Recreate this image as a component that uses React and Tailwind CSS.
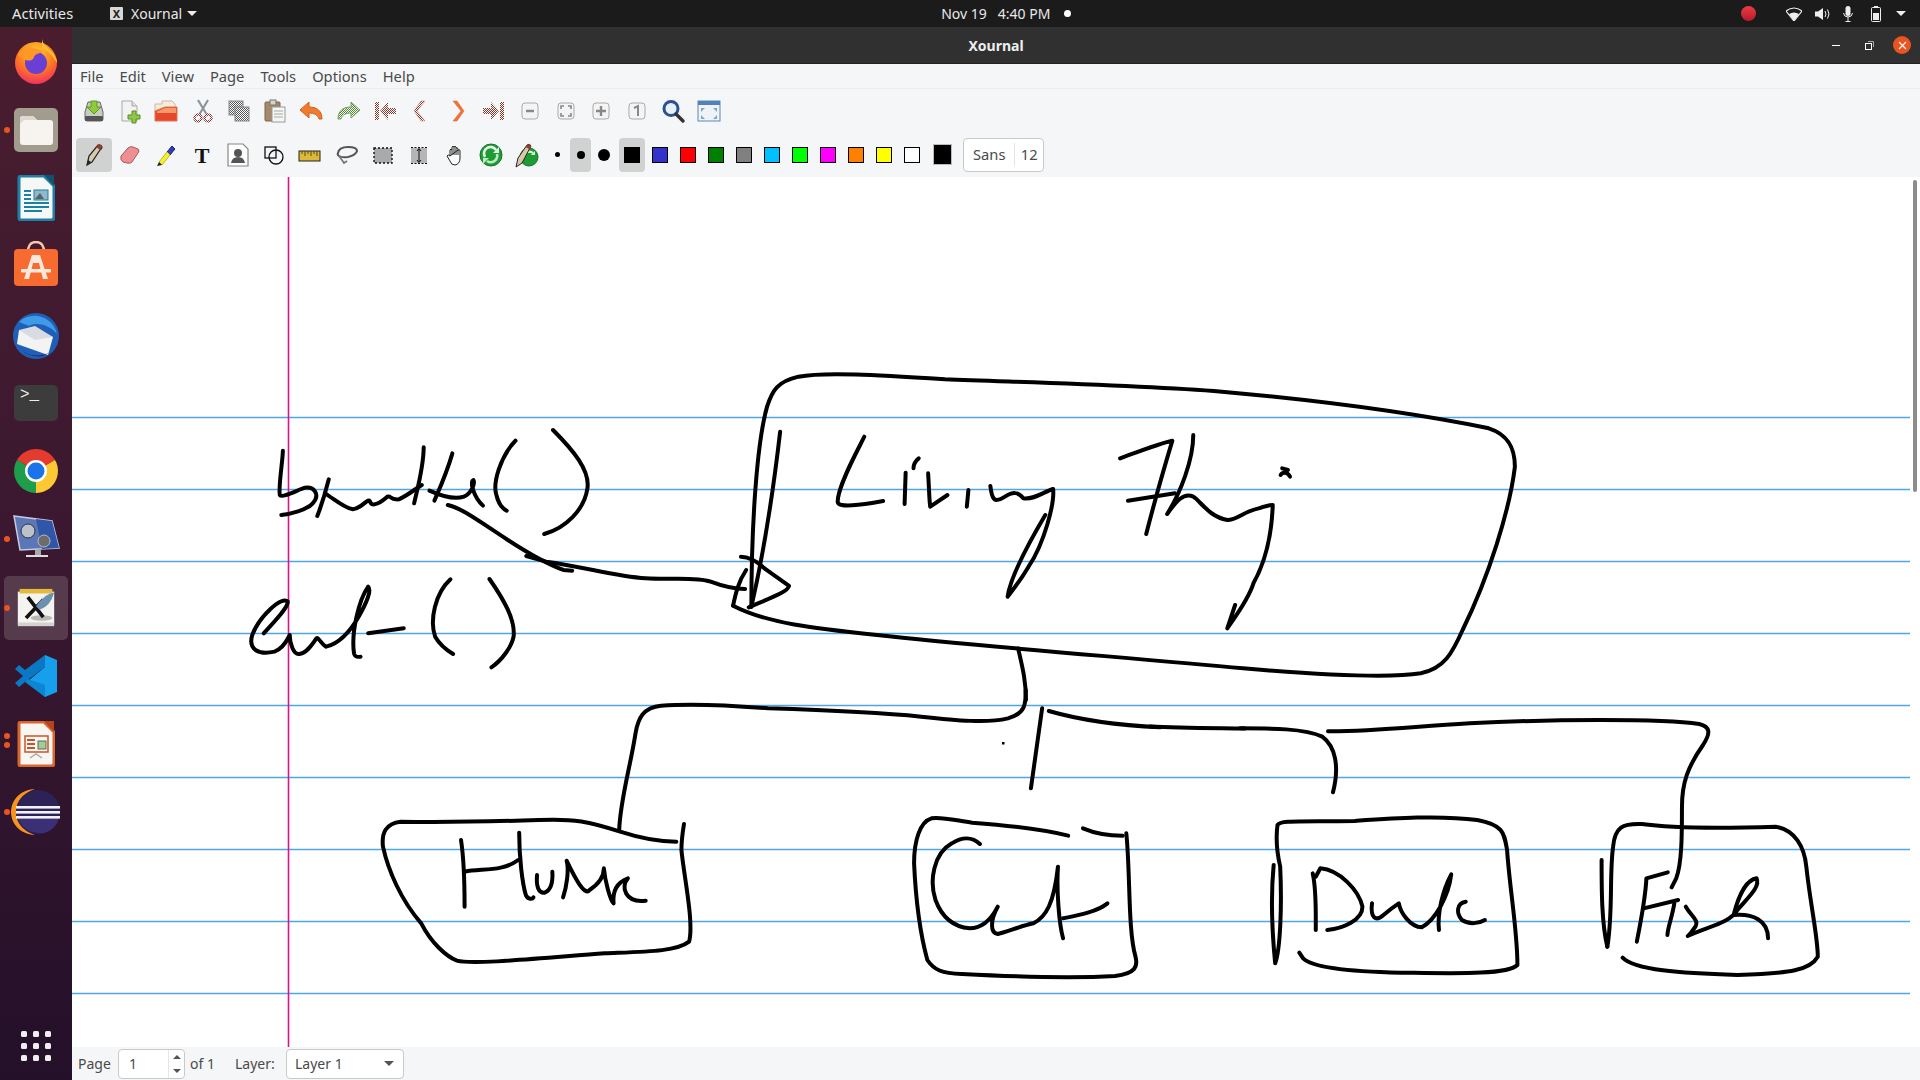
const Dither = ({ id, c }) => (
  <pattern id={id} width="2" height="2" patternUnits="userSpaceOnUse">
    <rect width="1" height="1" fill={c} />
    <rect x="1" y="1" width="1" height="1" fill={c} />
    <rect x="1" width="1" height="1" fill="#fff" />
    <rect y="1" width="1" height="1" fill="#fff" />
  </pattern>
);

const I = ({ children, s = 26 }) => (
  <svg width={s} height={s} viewBox="0 0 26 26">{children}</svg>
);

const toolbar1 = [
  <I key="0"><path d="M4 14 L7 4 H19 L22 14 V21 Q22 23 20 23 H6 Q4 23 4 21Z" fill="#c9ccc5" stroke="#666" /><rect x="4" y="18" width="18" height="5" rx="1" fill="#555" /><path d="M10 3 H16 V9 H20 L13 16 L6 9 H10Z" fill="#8ecb3a" stroke="#5c9a1e" /></I>,
  <I key="1"><path d="M5 3 H15 L20 8 V23 H5Z" fill="#f2f2f2" stroke="#aaa" /><path d="M15 3 V8 H20" fill="#ddd" stroke="#aaa" /><path d="M15 13 H19 V17 H23 V21 H19 V25 H15 V21 H11 V17 H15Z" fill="#8fc846" stroke="#5c8f20" /></I>,
  <I key="2"><path d="M2 6 H9 L9 3 H19 L22 6 V14 H2Z" fill="#f6ecdd" stroke="#cdb5a5" /><path d="M2 13 L12 9 H24 V23 H2Z" fill="#e8482a" stroke="#d97a50" /><path d="M4 13.5 L12 10 H23 V15 H4Z" fill="#f49a6b" /></I>,
  <I key="3"><defs><Dither id="d3" c="#8c2f2f" /></defs><path d="M8 2 L17 17 M18 2 L9 17" stroke="#8f9499" strokeWidth="2.2" /><circle cx="8" cy="20" r="3.5" fill="none" stroke="url(#d3)" strokeWidth="2.5" /><circle cx="18" cy="20" r="3.5" fill="none" stroke="url(#d3)" strokeWidth="2.5" /></I>,
  <I key="4"><defs><Dither id="d4" c="#555" /></defs><rect x="3" y="3" width="14" height="14" fill="url(#d4)" stroke="#888" /><rect x="9" y="9" width="14" height="14" fill="url(#d4)" stroke="#888" /></I>,
  <I key="5"><rect x="3" y="4" width="15" height="19" rx="1" fill="#a6886a" stroke="#7c6248" /><rect x="8" y="2" width="6" height="5" fill="#d9d3c7" stroke="#777" /><rect x="10" y="9" width="13" height="15" fill="#f5f5f3" stroke="#999" /><path d="M12 13 H21 M12 16 H21 M12 19 H21" stroke="#aaa" /></I>,
  <I key="6"><path d="M2 12 L11 4 V9 C18 9 24 12 24 21 L21 21 C20 17 16 15 11 15 V20Z" fill="#f07b2e" stroke="#d65f18" /></I>,
  <I key="7"><defs><Dither id="d7" c="#4d8a2e" /></defs><path d="M24 12 L15 4 V9 C8 9 2 12 2 21 L5 21 C6 17 10 15 15 15 V20Z" fill="url(#d7)" stroke="#7b9d68" /></I>,
  <I key="8"><defs><Dither id="d8" c="#8c3626" /></defs><path d="M3 4 H7 V22 H3Z M24 10 H16 V4 L8 13 L16 22 V16 H24Z" fill="url(#d8)" /></I>,
  <I key="9"><defs><Dither id="d9" c="#8c3626" /></defs><path d="M17 3 L9 13 L17 23 H13 L6 13 L13 3Z" fill="url(#d9)" stroke="#bc8f7e" strokeWidth=".5" /></I>,
  <I key="10"><path d="M9 3 L17 13 L9 23 H13 L20 13 L13 3Z" fill="#ef7338" stroke="#e4622a" strokeWidth=".5" /></I>,
  <I key="11"><defs><Dither id="d11" c="#8c3626" /></defs><path d="M23 4 H19 V22 H23Z M2 10 H10 V4 L18 13 L10 22 V16 H2Z" fill="url(#d11)" /></I>,
  <I key="12"><rect x="5" y="5" width="16" height="16" rx="3" fill="#f4f4f4" stroke="#aaa" /><path d="M9 13 H17" stroke="#888" strokeWidth="2.5" /></I>,
  <I key="13"><rect x="5" y="5" width="16" height="16" rx="3" fill="#f4f4f4" stroke="#aaa" /><path d="M8 11 V8 H11 M15 8 H18 V11 M18 15 V18 H15 M11 18 H8 V15" fill="none" stroke="#888" strokeWidth="1.6" /></I>,
  <I key="14"><rect x="5" y="5" width="16" height="16" rx="3" fill="#f4f4f4" stroke="#aaa" /><path d="M13 8 V18 M8 13 H18" stroke="#888" strokeWidth="2.4" /></I>,
  <I key="15"><rect x="5" y="5" width="16" height="16" rx="3" fill="#f4f4f4" stroke="#aaa" /><path d="M10 10 L14 8 V18" fill="none" stroke="#888" strokeWidth="2" /></I>,
  <I key="16"><circle cx="11" cy="10.5" r="7" fill="#e8f0f8" stroke="#2c4f93" strokeWidth="3" /><path d="M16 16 L23 23" stroke="#333" strokeWidth="3.4" strokeLinecap="round" /></I>,
  <I key="17"><rect x="2" y="3" width="22" height="20" fill="#eef3f8" stroke="#5c88b8" /><rect x="2" y="3" width="22" height="4" fill="#4f82b8" /><path d="M5 10 H9 L5 14Z M21 10 H17 L21 14Z M5 21 H9 L5 17Z M21 21 H17 L21 17Z" fill="#8aa4bd" /></I>,
];

const toolbar2 = [
  <I key="0"><path d="M6 23 L8 14 L17 3 Q20 2 21 5 Q21 7 19 8 L11 20Z" fill="#d8c9a8" stroke="#222" strokeWidth="1.2" /><path d="M15 5 L19 8 L21 5 Q20 2 17 3Z" fill="#9b3b2f" /><path d="M6 23 L7 18 L10 20Z" fill="#222" /></I>,
  <I key="1"><path d="M4 14 L11 6 Q13 4 16 5 L21 7 Q23 9 21 11 L15 20 Q13 22 10 21 L6 20 Q3 18 4 14Z" fill="#ee8f92" stroke="#a85a5a" /></I>,
  <I key="2"><path d="M14 10 L19 4 L22 7 L17 13Z" fill="#2f3dba" stroke="#1b237a" /><path d="M6 20 L14 10 L17 13 L9 23Z" fill="#f5f02e" stroke="#bdb820" /><path d="M6 20 L9 23 L4 24Z" fill="#222" /></I>,
  <I key="3"><text x="13" y="21" textAnchor="middle" fontFamily="Liberation Serif, serif" fontWeight="700" fontSize="22" fill="#111">T</text></I>,
  <I key="4"><path d="M3 2 H18 L23 7 V24 H3Z" fill="#fff" stroke="#888" strokeWidth="1.2" /><circle cx="13" cy="11" r="4" fill="#555" /><path d="M6 21 Q7 15 13 15 Q19 15 20 21Z" fill="#555" /></I>,
  <I key="5"><rect x="3" y="5" width="11" height="11" fill="#f5f5f5" stroke="#111" strokeWidth="1.3" /><circle cx="14" cy="15" r="7" fill="none" stroke="#111" strokeWidth="1.3" /></I>,
  <I key="6"><rect x="1" y="9" width="21" height="10" fill="#dcb93a" stroke="#222" /><path d="M4 9 V12 M7 9 V14 M10 9 V12 M13 9 V14 M16 9 V12 M19 9 V14" stroke="#5a4a12" /></I>,
  <I key="7"><path d="M4 11 Q5 5 14 5 Q23 5 23 9 Q22 13 14 15 Q8 16 5 14 Q3 12 4 11Z" fill="none" stroke="#555" strokeWidth="2" /><path d="M5 14 Q8 18 10 21 L13 19" fill="none" stroke="#777" strokeWidth="1.8" /></I>,
  <I key="8"><rect x="4" y="6" width="18" height="15" fill="#aaa" stroke="#111" strokeWidth="1.4" strokeDasharray="2 2" /></I>,
  <I key="9"><rect x="5" y="6" width="16" height="15" fill="#b5b5b5" /><path d="M5 5.5 H21 M5 21.5 H21" stroke="#111" strokeDasharray="2 1.5" /><path d="M13 7 V20 M11 9 L13 6.5 L15 9 M11 18 L13 20.5 L15 18" fill="none" stroke="#111" /></I>,
  <I key="10"><path d="M8 14 V8 Q9 6 10 8 V13 M10 8 V5 Q11 3.5 12 5 V13 M12 5 Q13 3.5 14 5 V13 M14 6 Q15.5 5 16 7 V13 M16 8 Q18 7 18 9 V16 Q18 22 13 23 Q9 23 8 19 L5 14 Q6 12 8 14Z" fill="#fff" stroke="#222" strokeWidth="1" /></I>,
  <I key="11"><circle cx="13" cy="13" r="11" fill="#1f9b35" stroke="#14762a" /><path d="M7 15 A6.5 6.5 0 0 1 18 8" fill="none" stroke="#e3f7e5" strokeWidth="2.6" /><path d="M15 11 H21 V5Z" fill="#e3f7e5" /><path d="M19 12 A6.5 6.5 0 0 1 9 19" fill="none" stroke="#b8ecbf" strokeWidth="2.6" /><path d="M11 16 H5 V22Z" fill="#b8ecbf" /></I>,
  <I key="12"><circle cx="15" cy="15" r="9" fill="#1f9b35" stroke="#14762a" /><path d="M10 16 A5.5 5.5 0 0 1 19 11" fill="none" stroke="#e3f7e5" strokeWidth="2.2" /><path d="M17 13 H21 V9Z" fill="#e3f7e5" /><path d="M2 25 L4 16 L13 3 Q16 1 17 4 L8 21Z" fill="#d8c9a8" stroke="#222" /><path d="M13 3 Q16 1 17 4 L15 7 L11.5 5Z" fill="#9b3b2f" /></I>,
];

const colors = ["#3333cc", "#ff0000", "#008000", "#808080", "#00c0ff", "#00ff00", "#ff00ff", "#ff8000", "#ffff00", "#ffffff"];

const Badge = ({ top }) => (
  <span className={`absolute left-[4px] w-[6px] h-[6px] rounded-full bg-[#e95420] ${top}`} />
);

const Drawing = () => (
  <svg className="block w-full h-full" viewBox="72 177 1838 870" preserveAspectRatio="none">
    {[417.5, 489.5, 561.5, 633.5, 705.5, 777.5, 849.5, 921.5, 993.5].map((y) => (
      <line key={y} x1="72" x2="1910" y1={y} y2={y} stroke="#4ea6e4" strokeWidth="1.5" />
    ))}
    <line x1="288.5" x2="288.5" y1="177" y2="1047" stroke="#d9138c" strokeWidth="1.6" />
    <g fill="none" stroke="#000" strokeLinecap="round" strokeLinejoin="round">
      <path d="M1150 726.5 C1180 728 1210 728 1245 728.5" strokeWidth="4" />
      <g transform="translate(240 360) scale(0.38265 0.33333)" style={{ strokeWidth: 4 }}>
        {[
          "M112 272 C112 300 100 380 104 405 C110 415 150 390 170 383 C195 380 210 405 190 430 C175 450 130 462 108 465",
          "M232 358 C225 390 215 430 202 468",
          "M222 400 C250 420 275 445 295 448 C320 445 335 410 340 425 C345 445 370 425 385 410 C395 405 390 420 415 418 C440 405 460 385 475 375",
          "M480 262 C480 320 465 380 455 430",
          "M555 280 C540 340 520 390 508 422",
          "M495 392 C530 410 560 420 585 410 C605 400 615 370 610 360 C600 365 610 410 635 437",
          "M720 242 C680 290 660 370 670 405 C675 430 685 445 697 452",
          "M818 210 C870 270 915 330 908 385 C900 450 850 505 795 522",
          "M543 435 C580 445 620 480 700 540 C760 585 810 615 845 630 L868 632",
          "M748 588 C770 595 785 600 800 605 C900 620 980 650 1060 655 C1130 660 1190 650 1230 665 C1260 678 1290 687 1320 687",
          "M62 820 C85 790 125 745 125 725 C110 705 50 770 32 825 C20 870 50 885 90 875 C115 865 125 835 130 825 C130 850 140 885 155 882 C175 880 190 850 200 835 C205 830 210 850 225 860 C260 850 290 810 310 770 C330 730 345 690 335 680 C310 720 290 820 298 880 C300 890 305 892 315 890",
          "M335 820 L428 805",
          "M550 658 C510 700 495 780 510 830 C520 850 540 870 557 882",
          "M652 657 C690 720 720 780 715 830 C710 860 685 900 657 922",
        ].map((d) => <path key={d} d={d} vectorEffect="non-scaling-stroke" />)}
      </g>
      <g transform="translate(720 360) scale(0.52296 0.33333)" style={{ strokeWidth: 4 }}>
        {[
          "M60 740 C60 500 70 250 90 140 C100 90 110 65 150 50 C200 35 300 45 430 58 C600 68 800 75 960 95 C1100 115 1300 150 1470 205 C1510 225 1520 270 1520 320 C1510 450 1470 650 1420 810 C1400 880 1385 925 1340 940 C1280 955 1150 945 1000 925 C800 895 500 860 300 825 C180 805 90 790 25 737",
          "M50 630 C35 665 30 700 25 737",
          "M115 215 C105 350 85 570 60 740",
          "M40 590 C60 590 75 610 85 625 L132 678 C130 695 100 712 55 742",
          "M276 230 C260 280 225 380 225 425 C225 445 270 435 312 423",
          "M380 295 C372 305 370 315 370 325",
          "M355 338 L353 432",
          "M398 340 C400 390 400 420 402 440 L435 405",
          "M475 390 L472 440",
          "M517 378 C520 420 525 430 545 410 C560 395 570 395 580 415 C600 420 620 395 637 387 C640 430 620 550 590 620 C575 660 560 690 550 710 C555 650 590 550 622 465",
          "M765 295 C800 275 840 250 865 242 C850 320 830 430 815 522",
          "M780 422 L870 400",
          "M905 225 C905 300 880 400 855 462 C870 430 885 395 905 410 C920 425 935 470 970 480 C990 480 1000 455 1030 445 C1040 440 1050 435 1057 435 C1055 520 1045 600 1020 670 C1010 720 985 770 970 805 L985 735",
          "M1072 345 C1076 335 1085 335 1090 350",
          "M1075 325 L1086 330",
          "M570 865 C578 920 585 960 585 1020",
        ].map((d) => <path key={d} d={d} vectorEffect="non-scaling-stroke" />)}
      </g>
      <g transform="translate(360 690) scale(0.5102 0.33333)" style={{ strokeWidth: 4 }}>
        {[
          "M1305 0 C1305 40 1305 70 1270 85 C1230 100 1170 92 1100 80 C1000 65 900 60 800 55 C720 45 650 40 590 47 C555 52 545 85 540 130 C530 230 510 330 508 420",
          "M620 455 C590 455 560 450 510 425 C450 395 420 385 350 390 C250 395 150 397 80 395 C50 400 42 430 45 470 C55 540 80 630 120 700 C140 760 170 800 190 812 C220 825 350 805 480 790 C560 785 620 785 645 755 C655 700 635 560 630 480 C630 450 632 430 635 402",
          "M198 450 C205 520 205 600 205 650",
          "M205 545 C240 535 280 545 310 510",
          "M312 428 C312 500 318 580 325 615 C330 630 338 628 340 622",
          "M347 555 C345 590 350 610 362 608 C375 600 378 570 377 545",
          "M398 622 C405 590 410 540 405 512 C420 560 440 620 450 600 C470 580 478 560 478 535 C480 570 490 630 497 640 C495 610 500 580 525 565 C510 590 520 640 560 632",
          "M1388 437 C1330 415 1260 405 1200 398 C1170 392 1140 380 1120 385 C1098 395 1086 450 1086 520 C1089 620 1096 720 1112 810 C1125 840 1140 850 1180 852 C1280 860 1400 865 1480 858 C1520 850 1525 830 1520 800 C1505 720 1510 550 1502 430",
          "M1417 415 C1440 430 1465 437 1495 437",
          "M1215 462 C1200 440 1180 440 1160 460 C1125 490 1115 570 1128 630 C1140 680 1160 710 1195 715 C1215 715 1235 695 1250 650 C1235 690 1235 730 1250 732 C1270 725 1300 705 1320 700 C1345 680 1360 640 1368 530 C1365 600 1370 700 1378 745",
          "M1378 685 C1410 675 1445 665 1465 640",
          "M1337 55 L1315 295",
          "M1350 63 C1400 85 1470 105 1568 112",
        ].map((d) => <path key={d} d={d} vectorEffect="non-scaling-stroke" />)}
      </g>
      <g transform="translate(1240 690) scale(0.38265 0.33333)" style={{ strokeWidth: 4 }}>
        {[
          "M0 115 C80 115 170 115 215 140 C250 170 260 230 243 307",
          "M230 124 C350 125 450 110 600 100 C800 88 1100 85 1200 102 C1230 110 1230 130 1210 165 C1170 230 1155 280 1155 350 C1155 430 1155 520 1140 565 L1128 592",
          "M88 525 C80 620 85 740 92 820 C105 780 110 650 105 530 C95 480 95 430 98 405 C105 390 150 395 300 393 C400 385 520 375 620 390 C690 405 690 430 698 480 C705 600 725 720 725 825 C700 855 560 850 420 848 C300 845 190 835 165 805 L155 788",
          "M190 550 C200 600 198 680 198 720",
          "M198 560 L210 535 C260 540 310 600 320 650 C320 690 270 715 228 720",
          "M345 640 C340 685 355 695 375 675 C395 655 415 640 415 640 C420 670 445 710 475 712 C510 690 545 620 552 553 C530 600 515 670 520 720",
          "M590 635 C565 640 565 670 580 690 C600 705 625 700 640 690",
          "M960 770 C945 700 945 600 945 510",
          "M960 770 C975 670 965 550 975 470 C980 410 1000 400 1050 402 C1130 415 1260 415 1400 410 C1450 420 1475 470 1480 530 C1490 640 1510 740 1510 800 C1490 840 1440 850 1300 855 C1150 850 1030 840 1000 803",
          "M1118 547 L1062 565 C1060 620 1050 680 1037 755",
          "M1055 655 L1145 630",
          "M1135 640 C1130 680 1118 710 1117 735",
          "M1165 650 C1180 680 1200 690 1190 710 C1180 725 1175 735 1170 738 C1220 710 1280 700 1300 660 C1330 620 1360 590 1350 565 C1320 570 1300 630 1290 675 C1340 670 1380 690 1380 745",
        ].map((d) => <path key={d} d={d} vectorEffect="non-scaling-stroke" />)}
      </g>
    </g>
    <rect x="1002" y="742" width="2.5" height="2.5" fill="#000" />
  </svg>
);

const Dock = () => (
  <div className="relative w-[72px] shrink-0 flex flex-col items-center pt-px bg-gradient-to-b from-[#4a1d2e] via-[#3a1830] to-[#241029]">
    <div className="relative h-[68.2px] w-full flex items-center justify-center">
      <svg className="-mt-[2px]" width="48" height="48" viewBox="0 0 48 48">
        <defs><radialGradient id="ff" cx="50%" cy="25%" r="80%"><stop offset="0" stopColor="#ffcb30" /><stop offset=".55" stopColor="#ff7a20" /><stop offset="1" stopColor="#f0246c" /></radialGradient></defs>
        <circle cx="24" cy="26" r="21" fill="url(#ff)" />
        <path d="M30 1 C30 10 42 12 45 24 C46 30 40 14 30 12Z" fill="#ffbd2e" />
        <circle cx="24" cy="26" r="11" fill="#6b3fd4" />
        <path d="M6 18 C12 10 22 10 30 14 C34 16 24 15 22 20 C20 26 12 24 6 18Z" fill="#ff9824" />
      </svg>
    </div>
    <div className="relative h-[68.2px] w-full flex items-center justify-center">
      <Badge top="top-[31px]" />
      <div className="w-[44px] h-[44px] rounded-[5px] bg-[#a29c8e] flex items-center justify-center">
        <svg width="33" height="29" viewBox="0 0 33 29"><path d="M0 3 Q0 0 3 0 H13 L17 4 H30 Q33 4 33 7 V26 Q33 29 30 29 H3 Q0 29 0 26Z" fill="#f7f4ef" /><path d="M0 3 Q0 0 3 0 H13 L17 4 H4 L0 8Z" fill="#ddd9d1" /></svg>
      </div>
    </div>
    <div className="relative h-[68.2px] w-full flex items-center justify-center">
      <svg width="38" height="46" viewBox="0 0 38 46">
        <path d="M2 3 Q2 1 4 1 H27 L37 11 V42 Q37 45 34 45 H4 Q2 45 2 43Z" fill="#f6f8f8" stroke="#1c7fa5" strokeWidth="3" />
        <path d="M27 0 H37 V11Z" fill="#15506f" />
        <path d="M7 16 H14 M7 20 H14 M7 24 H14 M7 28 H32 M7 32 H32 M7 36 H25" stroke="#1c7fa5" strokeWidth="2.2" />
        <rect x="17" y="15" width="14" height="10" fill="#8fb8c8" stroke="#1c7fa5" />
        <path d="M18 24 L23 18 L27 24Z" fill="#56636a" />
      </svg>
    </div>
    <div className="relative h-[68.2px] w-full flex items-center justify-center">
      <svg className="-mt-[5px]" width="46" height="46" viewBox="0 0 46 46">
        <path d="M15 11 Q15 1 23 1 Q31 1 31 11" fill="none" stroke="#f9c9ad" strokeWidth="2.4" />
        <rect x="1" y="8" width="44" height="37" rx="4" fill="#f76b31" />
        <path d="M19 14 H27 L35 38 H30 L26 22 H20 L16 38 H11Z" fill="#fde8dc" />
        <rect x="8" y="28" width="30" height="3.4" rx="1" fill="#fde8dc" />
      </svg>
    </div>
    <div className="relative h-[68.2px] w-full flex items-center justify-center">
      <svg width="50" height="50" viewBox="0 0 50 50">
        <circle cx="25" cy="26" r="23" fill="#1f5fb8" />
        <path d="M8 12 C20 0 42 6 46 24 C38 14 24 12 18 16Z" fill="#3f9be8" />
        <path d="M8 20 L42 27 L37 45 L6 34Z" fill="#f3f3f3" />
        <path d="M8 20 L24 16 L42 27 L24 30Z" fill="#d8dbe2" />
        <path d="M10 40 Q24 50 40 42 L32 46 Q20 48 10 40Z" fill="#25265f" />
      </svg>
    </div>
    <div className="relative h-[68.2px] w-full flex items-center justify-center">
      <div className="w-[44px] h-[36px] rounded-[5px] bg-[#3c3c3c] px-[6px] pt-[2px] text-[16px] leading-[16px] text-[#eee] [font-family:'Liberation_Mono',monospace]">
        &gt;_
      </div>
    </div>
    <div className="relative h-[68.2px] w-full flex items-center justify-center">
      <svg width="48" height="48" viewBox="0 0 48 48">
        <path d="M24 24 L5 13 A22 22 0 0 1 43 13Z" fill="#e33b2e" />
        <path d="M24 24 L43 13 A22 22 0 0 1 24 46Z" fill="#fcc934" />
        <path d="M24 24 L24 46 A22 22 0 0 1 5 13Z" fill="#1e9e4a" />
        <circle cx="24" cy="24" r="11" fill="#fff" />
        <circle cx="24" cy="24" r="8.5" fill="#1a73e8" />
      </svg>
    </div>
    <div className="relative h-[68.2px] w-full flex items-center justify-center">
      <Badge top="top-[31px]" />
      <svg width="48" height="50" viewBox="0 0 48 50">
        <path d="M2 2 L40 7 L47 34 L8 36Z" fill="#5b77b8" stroke="#c9c9dc" strokeWidth="1.5" />
        <path d="M24 5 L40 7 L47 34 L30 35Z" fill="#2f56a8" />
        <circle cx="16" cy="17" r="7" fill="#bcc2cc" stroke="#333" />
        <circle cx="32" cy="27" r="6" fill="#6c6c6c" stroke="#bbb" />
        <rect x="23" y="36" width="6" height="5" fill="#aaa" />
        <rect x="14" y="41" width="22" height="2" fill="#ddd" />
      </svg>
    </div>
    <div className="relative h-[68.2px] w-full flex items-center justify-center">
      <div className="w-[64px] h-[64px] rounded-[5px] bg-[#563b4c] flex items-center justify-center">
        <svg width="40" height="42" viewBox="0 0 44 44">
          <rect x="2" y="4" width="40" height="36" fill="#f3f3ef" />
          <rect x="4" y="1" width="36" height="5" fill="#e4b93c" />
          <rect x="2" y="38" width="40" height="4" fill="#d2d2ce" />
          <ellipse cx="28" cy="33" rx="12" ry="3" fill="#b8b8b8" />
          <path d="M13 10 L30 32 M30 13 L11 33" stroke="#111" strokeWidth="4" />
          <path d="M22 20 Q32 6 42 5 Q38 20 26 24Z" fill="#6b90b0" />
        </svg>
      </div>
      <Badge top="top-[31px]" />
    </div>
    <div className="relative h-[68.2px] w-full flex items-center justify-center">
      <svg width="44" height="42" viewBox="0 0 44 42">
        <path d="M31 0 L43 5 V37 L31 42 L14 26 L31 12Z" fill="#16a0ec" />
        <path d="M31 0 V12 L11 27 L5 32 L1 28 L9 21 L1 14 L5 10 L11 15Z" fill="#0a78c2" />
        <path d="M31 30 V42 L11 27 L14 24Z" fill="#0c86d2" />
      </svg>
    </div>
    <div className="relative h-[68.2px] w-full flex items-center justify-center">
      <Badge top="top-[23px]" />
      <Badge top="top-[32px]" />
      <svg width="38" height="46" viewBox="0 0 38 46">
        <path d="M2 3 Q2 1 4 1 H27 L37 11 V42 Q37 45 34 45 H4 Q2 45 2 43Z" fill="#f8f6f3" stroke="#d9642c" strokeWidth="3" />
        <path d="M27 0 H37 V11Z" fill="#b5431c" />
        <rect x="8" y="15" width="23" height="16" fill="none" stroke="#c5562b" strokeWidth="1.5" />
        <path d="M10 19 H18 M10 23 H18 M10 27 H18" stroke="#c5562b" strokeWidth="2" />
        <rect x="21" y="20" width="8" height="8" fill="#9fcf8c" stroke="#666" />
        <path d="M13 37 L19 33 L25 37" fill="none" stroke="#aaa" strokeWidth="1.5" />
      </svg>
    </div>
    <div className="relative h-[68.2px] w-full flex items-center justify-center">
      <Badge top="top-[31px]" />
      <svg width="50" height="46" viewBox="0 0 50 46">
        <path d="M24 0 C8 1 0 12 0 23 C0 34 8 45 24 46 C12 42 5 33 5 23 C5 13 12 4 24 0Z" fill="#f7941e" />
        <circle cx="27" cy="23" r="22" fill="#2c2255" />
        <path d="M6 28 H48 Q46 40 33 44 Q16 46 8 32Z" fill="#3b2f77" />
        <rect x="5" y="17" width="44" height="2.6" fill="#f2f0fa" />
        <rect x="5" y="22" width="44" height="2.6" fill="#f2f0fa" />
        <rect x="5" y="27" width="44" height="2.6" fill="#f2f0fa" />
      </svg>
    </div>
    <div className="mt-auto mb-[19px] grid grid-cols-3 gap-[6px]">
      {[0, 1, 2, 3, 4, 5, 6, 7, 8].map((i) => (
        <span key={i} className="w-[6px] h-[6px] rounded-[1.5px] bg-[#f0eef0]" />
      ))}
    </div>
  </div>
);

export default function App() {
  return (
    <div className="w-[1920px] h-[1080px] overflow-hidden flex flex-col bg-white [font-family:'Noto_Sans','Open_Sans',sans-serif]">
      <div className="h-[27px] shrink-0 bg-[#1b1b1b] flex items-center text-[14px] text-[#e8e8e8]">
        <span className="ml-[12px] w-[98px] text-[14.7px]">Activities</span>
        <div className="w-[13px] h-[13px] bg-[#d8d8d4] rounded-[1px] flex items-center justify-center text-[11px] font-bold leading-none text-[#222]">X</div>
        <span className="ml-[8px]">Xournal</span>
        <span className="ml-[5px] w-0 h-0 border-x-[5px] border-x-transparent border-t-[5px] border-t-[#eee]" />
        <span className="ml-[744px] text-[14px]">Nov 19&nbsp;&nbsp;&nbsp;4:40 PM</span>
        <span className="ml-[14px] w-[7px] h-[7px] rounded-full bg-white" />
        <div className="ml-auto flex items-center gap-[13px] mr-[14px]">
          <span className="mr-[1px] w-[15px] h-[15px] rounded-full bg-gradient-to-b from-[#ee3b45] to-[#b81a2a]" />
          <svg className="ml-[16px]" width="16" height="14" viewBox="0 0 16 14"><path d="M0 4 Q8 -2 16 4 L8 14Z" fill="none" stroke="#eee" strokeWidth="1.2" /><path d="M3 7 Q8 4 13 7 L8 14Z" fill="#eee" /></svg>
          <svg width="15" height="14" viewBox="0 0 15 14"><path d="M0 4.5 H3 L8 1 V13 L3 9.5 H0Z" fill="#eee" /><path d="M10 4 Q12 7 10 10 M12.5 2.5 Q15.5 7 12.5 11.5" fill="none" stroke="#eee" /></svg>
          <svg width="10" height="16" viewBox="0 0 10 16"><rect x="2.5" y="0" width="5" height="10" rx="2.5" fill="#eee" /><path d="M0.5 7 Q1 11 5 11 Q9 11 9.5 7 M5 11 V15 M2.5 15.5 H7.5" fill="none" stroke="#eee" /></svg>
          <svg className="ml-[5px]" width="10" height="16" viewBox="0 0 10 16"><rect x="0.5" y="1.5" width="9" height="14" rx="1" fill="none" stroke="#eee" /><rect x="3" y="0" width="4" height="1.5" fill="#eee" /><rect x="2" y="7" width="6" height="7" fill="#eee" /></svg>
          <span className="ml-[2px] w-0 h-0 border-x-[5px] border-x-transparent border-t-[5px] border-t-[#eee]" />
        </div>
      </div>
      <div className="flex-1 min-h-0 flex">
        <Dock />
        <div className="flex-1 min-w-0 flex flex-col">
          <div className="h-[37px] shrink-0 bg-[#303030] border-b border-[#222] relative flex items-center justify-center text-[14px] font-bold text-[#eee]">
            Xournal
            <div className="absolute right-[9px] top-[0px] h-[36px] flex items-center">
              <span className="w-[8px] h-px bg-white mr-[25px]" />
              <svg className="mr-[19px]" width="9" height="9" viewBox="0 0 9 9"><rect x="0.5" y="2.5" width="6" height="6" fill="none" stroke="#fff" /><path d="M3 .5 H8.5 V6" fill="none" stroke="#aaa" /></svg>
              <span className="w-[18px] h-[18px] rounded-full bg-[#e95420] flex items-center justify-center">
                <svg width="9" height="9" viewBox="0 0 9 9"><path d="M1 1 L8 8 M8 1 L1 8" stroke="#fff" strokeWidth="1.1" /></svg>
              </span>
            </div>
          </div>
          <div className="h-[25px] shrink-0 bg-[#f5f6f7] border-b border-[#ebedee] flex items-center text-[14.7px] text-[#4a4a4a]">
            {["File", "Edit", "View", "Page", "Tools", "Options", "Help"].map((m) => (
              <span key={m} className="px-[8px]">{m}</span>
            ))}
          </div>
          <div className="h-[44px] shrink-0 bg-[#f5f6f7] flex items-center pl-[4px]">
            {toolbar1.map((ic, i) => (
              <span key={i} className={`w-[36.2px] flex justify-center ${i >= 7 && i <= 13 ? "pl-[3px]" : ""}`}>{ic}</span>
            ))}
          </div>
          <div className="h-[44px] shrink-0 bg-[#f5f6f7] flex items-center pl-[4px] pb-px">
            {toolbar2.map((ic, i) => (
              <span key={i} className={`w-[36.1px] h-[34px] flex items-center justify-center ${i === 0 ? "bg-[#d0d1d1] rounded-[4px]" : ""}`}>{ic}</span>
            ))}
            <span className="w-[25px] h-[34px] flex items-center justify-center"><span className="w-[5px] h-[5px] rounded-full bg-black" /></span>
            <span className="w-[21px] h-[34px] bg-[#d0d1d1] rounded-[4px] flex items-center justify-center"><span className="w-[8px] h-[8px] rounded-full bg-black" /></span>
            <span className="w-[26px] h-[34px] flex items-center justify-center"><span className="w-[12px] h-[12px] rounded-full bg-black" /></span>
            <span className="ml-[2px] w-[26px] h-[34px] bg-[#d0d1d1] rounded-[4px] flex items-center justify-center"><span className="w-[16px] h-[16px] bg-black" /></span>
            <span className="w-px" />
            {colors.map((c) => (
              <span key={c} className="w-[28px] flex justify-center">
                <span className="w-[16px] h-[16px] border border-black" style={{ backgroundColor: c }} />
              </span>
            ))}
            <span className="ml-[7px] w-[19px] h-[21px] bg-black border border-[#bbb]" />
            <div className="ml-[11px] w-[81px] h-[34px] bg-white border border-[#c8caca] rounded-[4px] flex items-center text-[14.7px] text-[#4a4a4a]">
              <span className="w-[51px] text-center border-r border-[#e5e5e5]">Sans</span>
              <span className="flex-1 text-center">12</span>
            </div>
          </div>
          <div className="flex-1 min-h-0 flex bg-white">
            <div className="flex-1 min-w-0"><Drawing /></div>
            <div className="w-[10px] shrink-0 bg-white pt-[3px] pl-[3px]">
              <div className="w-[4px] h-[312px] rounded-full bg-[#8c8c8c]" />
            </div>
          </div>
          <div className="h-[33px] shrink-0 bg-[#f5f6f7] flex items-center text-[14px] text-[#4a4a4a]">
            <span className="ml-[6px] w-[40px]">Page</span>
            <div className="w-[67px] h-[30px] bg-white border border-[#c8caca] rounded-[4px] flex items-center">
              <span className="ml-[10px] flex-1">1</span>
              <div className="w-[16px] h-full border-l border-[#e5e5e5] flex flex-col items-center justify-around">
                <span className="w-0 h-0 border-x-[4px] border-x-transparent border-b-[4px] border-b-[#555]" />
                <span className="w-0 h-0 border-x-[4px] border-x-transparent border-t-[4px] border-t-[#555]" />
              </div>
            </div>
            <span className="ml-[5px] w-[45px]">of 1</span>
            <span className="w-[51px]">Layer:</span>
            <div className="w-[118px] h-[30px] bg-white border border-[#c8caca] rounded-[4px] flex items-center px-[8px]">
              <span className="flex-1">Layer 1</span>
              <span className="mr-[1px] w-0 h-0 border-x-[5px] border-x-transparent border-t-[5px] border-t-[#555]" />
            </div>
          </div>
        </div>
      </div>
    </div>
  );
}
